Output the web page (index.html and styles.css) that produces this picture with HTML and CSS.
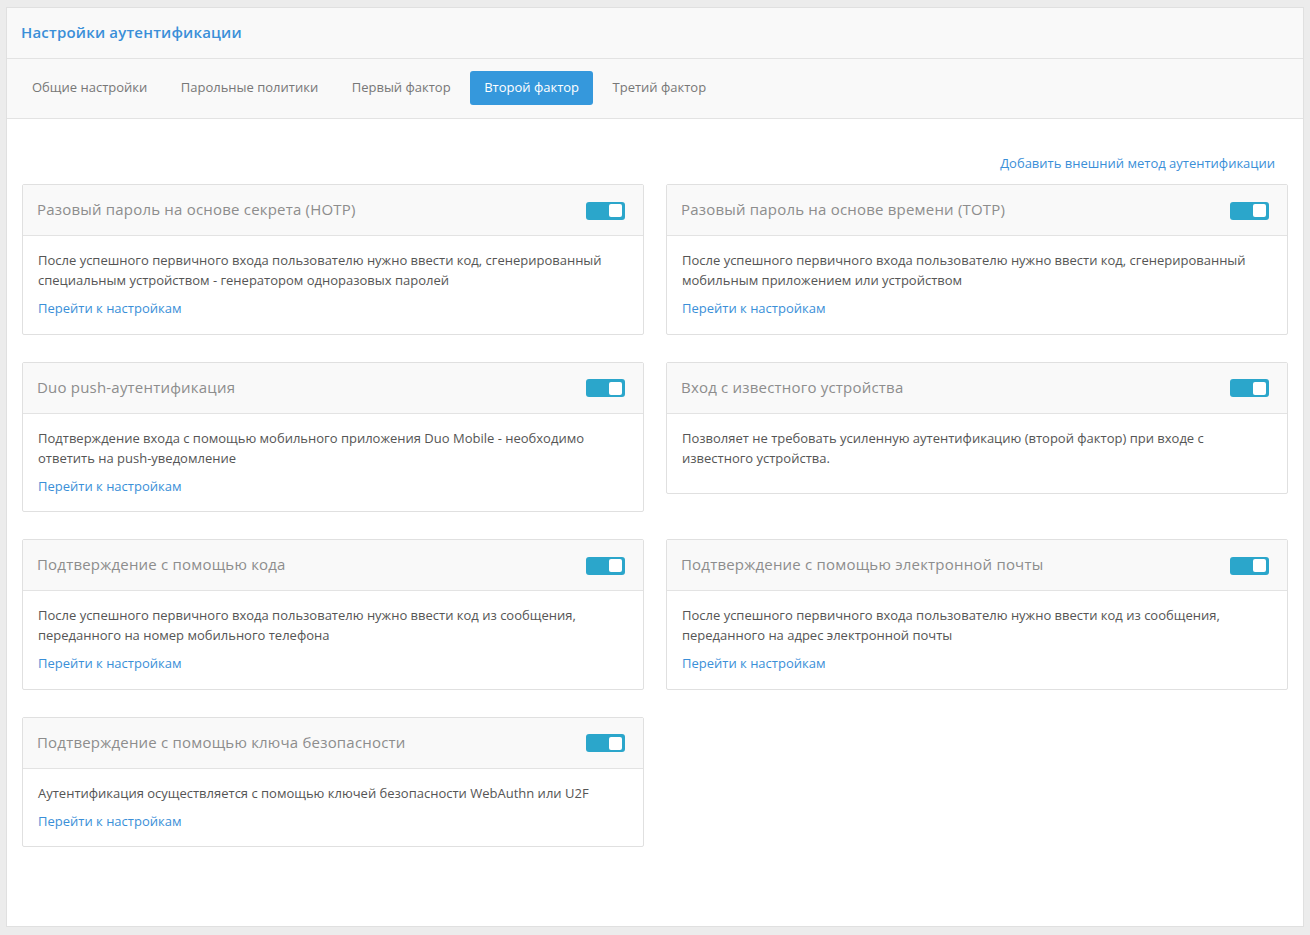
FILE: index.html
```html
<!DOCTYPE html>
<html lang="ru">
<head>
<meta charset="utf-8">
<title>Настройки аутентификации</title>
<link rel="stylesheet" href="styles.css">
</head>
<body>
<div class="panel">
  <div class="panel-head">
    <h1 class="panel-title">Настройки аутентификации</h1>
  </div>
  <div class="tabs">
    <a class="tab">Общие настройки</a>
    <a class="tab">Парольные политики</a>
    <a class="tab">Первый фактор</a>
    <a class="tab active">Второй фактор</a>
    <a class="tab">Третий фактор</a>
  </div>
  <div class="content">
    <div class="toolbar"><a class="link">Добавить внешний метод аутентификации</a></div>
    <div class="grid">
      <div class="card">
        <div class="card-head"><span class="card-title">Разовый пароль на основе секрета (HOTP)</span><span class="toggle"><span class="knob"></span></span></div>
        <div class="card-body">
          <p class="desc">После успешного первичного входа пользователю нужно ввести код, сгенерированный специальным устройством - генератором одноразовых паролей</p>
          <a class="link">Перейти к настройкам</a>
        </div>
      </div>
      <div class="card">
        <div class="card-head"><span class="card-title">Разовый пароль на основе времени (TOTP)</span><span class="toggle"><span class="knob"></span></span></div>
        <div class="card-body">
          <p class="desc">После успешного первичного входа пользователю нужно ввести код, сгенерированный мобильным приложением или устройством</p>
          <a class="link">Перейти к настройкам</a>
        </div>
      </div>
      <div class="card">
        <div class="card-head"><span class="card-title">Duo push-аутентификация</span><span class="toggle"><span class="knob"></span></span></div>
        <div class="card-body">
          <p class="desc">Подтверждение входа с помощью мобильного приложения Duo Mobile - необходимо ответить на push-уведомление</p>
          <a class="link">Перейти к настройкам</a>
        </div>
      </div>
      <div class="card">
        <div class="card-head"><span class="card-title">Вход с известного устройства</span><span class="toggle"><span class="knob"></span></span></div>
        <div class="card-body">
          <p class="desc">Позволяет не требовать усиленную аутентификацию (второй фактор) при входе с известного устройства.</p>
        </div>
      </div>
      <div class="card">
        <div class="card-head"><span class="card-title">Подтверждение с помощью кода</span><span class="toggle"><span class="knob"></span></span></div>
        <div class="card-body">
          <p class="desc">После успешного первичного входа пользователю нужно ввести код из сообщения, переданного на номер мобильного телефона</p>
          <a class="link">Перейти к настройкам</a>
        </div>
      </div>
      <div class="card">
        <div class="card-head"><span class="card-title">Подтверждение с помощью электронной почты</span><span class="toggle"><span class="knob"></span></span></div>
        <div class="card-body">
          <p class="desc">После успешного первичного входа пользователю нужно ввести код из сообщения, переданного на адрес электронной почты</p>
          <a class="link">Перейти к настройкам</a>
        </div>
      </div>
      <div class="card">
        <div class="card-head"><span class="card-title">Подтверждение с помощью ключа безопасности</span><span class="toggle"><span class="knob"></span></span></div>
        <div class="card-body">
          <p class="desc">Аутентификация осуществляется с помощью ключей безопасности WebAuthn или U2F</p>
          <a class="link">Перейти к настройкам</a>
        </div>
      </div>
    </div>
  </div>
</div>
</body>
</html>
```

FILE: styles.css
```css
* { box-sizing: border-box; }
html, body { margin: 0; padding: 0; }
body {
  background: #ececec;
  font-family: "Open Sans", "Noto Sans", sans-serif;
  font-size: 13px;
  color: #555;
  padding: 7px 6px 8px 6px;
}
.panel {
  background: #fff;
  border: 1px solid #e0e0e0;
  height: 920px;
}
.panel-head {
  background: #f9f9f9;
  height: 51px;
  border-bottom: 1px solid #e3e3e3;
  display: flex;
  align-items: center;
  padding: 0 14px 2px 14px;
}
.panel-title {
  margin: 0;
  font-size: 15px;
  font-weight: 600;
  letter-spacing: 0.2px;
  color: #3a8fd8;
}
.tabs {
  background: #f9f9f9;
  height: 60px;
  border-bottom: 1px solid #e3e3e3;
  display: flex;
  align-items: flex-start;
  padding: 12px 0 0 11px;
  gap: 5.5px;
}
.tab {
  display: block;
  height: 34px;
  line-height: 33px;
  padding: 0 14px 1px 14px;
  border-radius: 3px;
  color: #777;
  font-size: 13px;
  cursor: pointer;
}
.tab.active {
  background: #3598dc;
  color: #fff;
}
.content {
  padding: 15px 15px;
}
.toolbar {
  display: flex;
  justify-content: flex-end;
  padding: 19px 13px 0 0;
  margin-bottom: 11px;
  line-height: 20px;
}
.link {
  color: #3a8fd8;
  font-size: 13px;
  line-height: 20px;
  cursor: pointer;
  display: block;
}
.grid {
  display: grid;
  grid-template-columns: 1fr 1fr;
  column-gap: 22px;
  row-gap: 27px;
  align-items: start;
}
.card {
  border: 1px solid #e0e0e0;
  border-radius: 2px;
}
.card-head {
  background: #f9f9f9;
  height: 51px;
  border-bottom: 1px solid #e3e3e3;
  display: flex;
  align-items: center;
  justify-content: space-between;
  padding: 0 18px 2px 14px;
}
.card-title {
  font-size: 15px;
  letter-spacing: 0.2px;
  color: #8d8d8d;
}
.toggle {
  width: 39px;
  height: 18px;
  background: #2ba6cb;
  border-radius: 3px;
  display: flex;
  justify-content: flex-end;
  align-items: center;
  padding-right: 3px;
  margin-top: 3px;
}
.knob {
  width: 13px;
  height: 13px;
  background: #fff;
  border-radius: 2px;
}
.card-body {
  padding: 14px 15px 15.5px 15px;
}
.desc {
  margin: 0 0 9.5px 0;
  line-height: 20px;
  color: #555;
}
.desc + .link {
  margin-top: -1.5px;
}
```
